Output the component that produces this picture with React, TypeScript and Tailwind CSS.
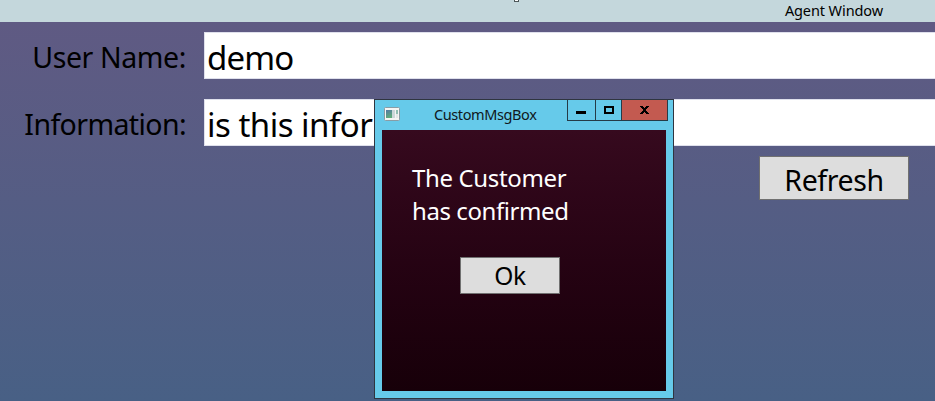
import type { ReactNode } from "react";

function Field({ label, labelClass, value, valueClass }: { label: string; labelClass: string; value: string; valueClass: string }) {
  return (
    <div className="flex h-[47px] items-center">
      <div className="flex w-[204px] justify-end pt-[3px] pr-[18px]">
        <span className={`whitespace-nowrap leading-[40px] ${labelClass}`}>{label}</span>
      </div>
      <div className="flex h-[47px] flex-1 items-center border-y border-l border-[#dfe0ec] bg-white pt-[4px] pl-[2px]">
        <span className={`whitespace-nowrap text-[33px] leading-[40px] ${valueClass}`}>{value}</span>
      </div>
    </div>
  );
}

function PushButton({ className, children }: { className: string; children: ReactNode }) {
  return (
    <button className={`flex items-center justify-center border border-[#707070] bg-[#dddddd] text-black ${className}`}>
      {children}
    </button>
  );
}

function MessageBox() {
  return (
    <div className="absolute top-[99px] left-[374px] flex h-[300px] w-[300px] flex-col border border-[#2f3540] bg-[#66caea] px-[7px] pb-[7px]">
      <div className="relative h-[30px] shrink-0">
        <svg className="absolute top-[7px] left-[2px]" width="16" height="14" viewBox="0 0 16 14">
          <defs>
            <linearGradient id="pane" x1="0" y1="0" x2="0.4" y2="1">
              <stop offset="0" stopColor="#5478a5" />
              <stop offset="1" stopColor="#5fab7b" />
            </linearGradient>
          </defs>
          <rect x=".5" y=".5" width="15" height="13" rx="1" fill="#f5f5f4" stroke="#899da6" />
          <rect x="2" y="3" width="6" height="8" fill="url(#pane)" />
          <rect x="8" y="3" width="3" height="8" fill="#cbd7d9" />
          <rect x="12" y="3" width="2" height="4" fill="#91bfb3" />
          <rect x="12" y="7" width="2" height="4" fill="#e3e7e7" />
        </svg>
        <span className="absolute top-[4px] left-[52px] text-[14.5px] leading-[20px] tracking-[-0.4px] whitespace-nowrap text-[#101820]">CustomMsgBox</span>
        <div className="absolute top-0 -right-[2px] flex h-[21px] border-x border-b border-[#253b47]">
          <span className="flex w-[28px] border-r border-[#253b47] pl-[8px]">
            <svg width="10" height="20" viewBox="0 0 10 20"><path d="M0 11h10v3H0z" fill="#000" /></svg>
          </span>
          <span className="flex w-[26px] border-r border-[#253b47] pl-[8px]">
            <svg width="10" height="20" viewBox="0 0 10 20"><path d="M1 7h8v6H1z" fill="none" stroke="#000" strokeWidth="2" /></svg>
          </span>
          <span className="flex w-[45px] bg-[#c35a50] pl-[18px]">
            <svg width="9" height="20" viewBox="0 0 9 20" shapeRendering="crispEdges">
              <path d="M0 6h3v1h1v1h1V7h1V6h3v1H8v1H7v1H6v2h1v1h1v1h1v1H6v-1H5v-1H4v1H3v1H0v-1h1v-1h1v-1h1V9H2V8H1V7H0z" fill="#000" />
            </svg>
          </span>
        </div>
      </div>
      <div className="flex flex-1 flex-col items-start bg-linear-to-b from-[#360a1e] to-[#170009] pt-[31px] pl-[30px]">
        <p className="text-[24px] leading-[33px] whitespace-nowrap text-white">
          <span className="block tracking-[-0.35px]">The Customer</span>
          <span className="block tracking-[-0.42px]">has confirmed</span>
        </p>
        <PushButton className="mt-[30px] ml-[48px] h-[37px] w-[100px] text-[24.5px] leading-[34px] tracking-[-0.3px]">Ok</PushButton>
      </div>
    </div>
  );
}

export default function App() {
  return (
    <main className="relative flex h-[401px] w-[935px] flex-col overflow-hidden bg-[#c4d7dc] font-['Noto_Sans','Open_Sans',sans-serif] text-black">
      <header className="relative flex h-[22px] shrink-0 justify-end pr-[52px]">
        <span className="absolute -top-[3px] left-[514px] size-[5px] border border-[#4d5759] bg-white" />
        <span className="text-[14.5px] leading-[21px] tracking-[-0.1px] whitespace-nowrap">Agent Window</span>
      </header>
      <section className="flex flex-1 flex-col gap-[20px] bg-linear-to-b from-[#5f5a83] to-[#486085] pt-[10px]">
        <Field label="User Name:" labelClass="text-[28.5px] tracking-[-0.4px]" value="demo" valueClass="tracking-[-0.8px]" />
        <Field label="Information:" labelClass="text-[28.5px] tracking-[-0.6px]" value="is this infor" valueClass="tracking-[-0.5px]" />
        <PushButton className="-mt-[10px] mr-[26px] h-[44px] w-[150px] self-end pt-[4px] text-[28.5px] leading-[38px] tracking-[-0.4px]">Refresh</PushButton>
      </section>
      <MessageBox />
    </main>
  );
}
